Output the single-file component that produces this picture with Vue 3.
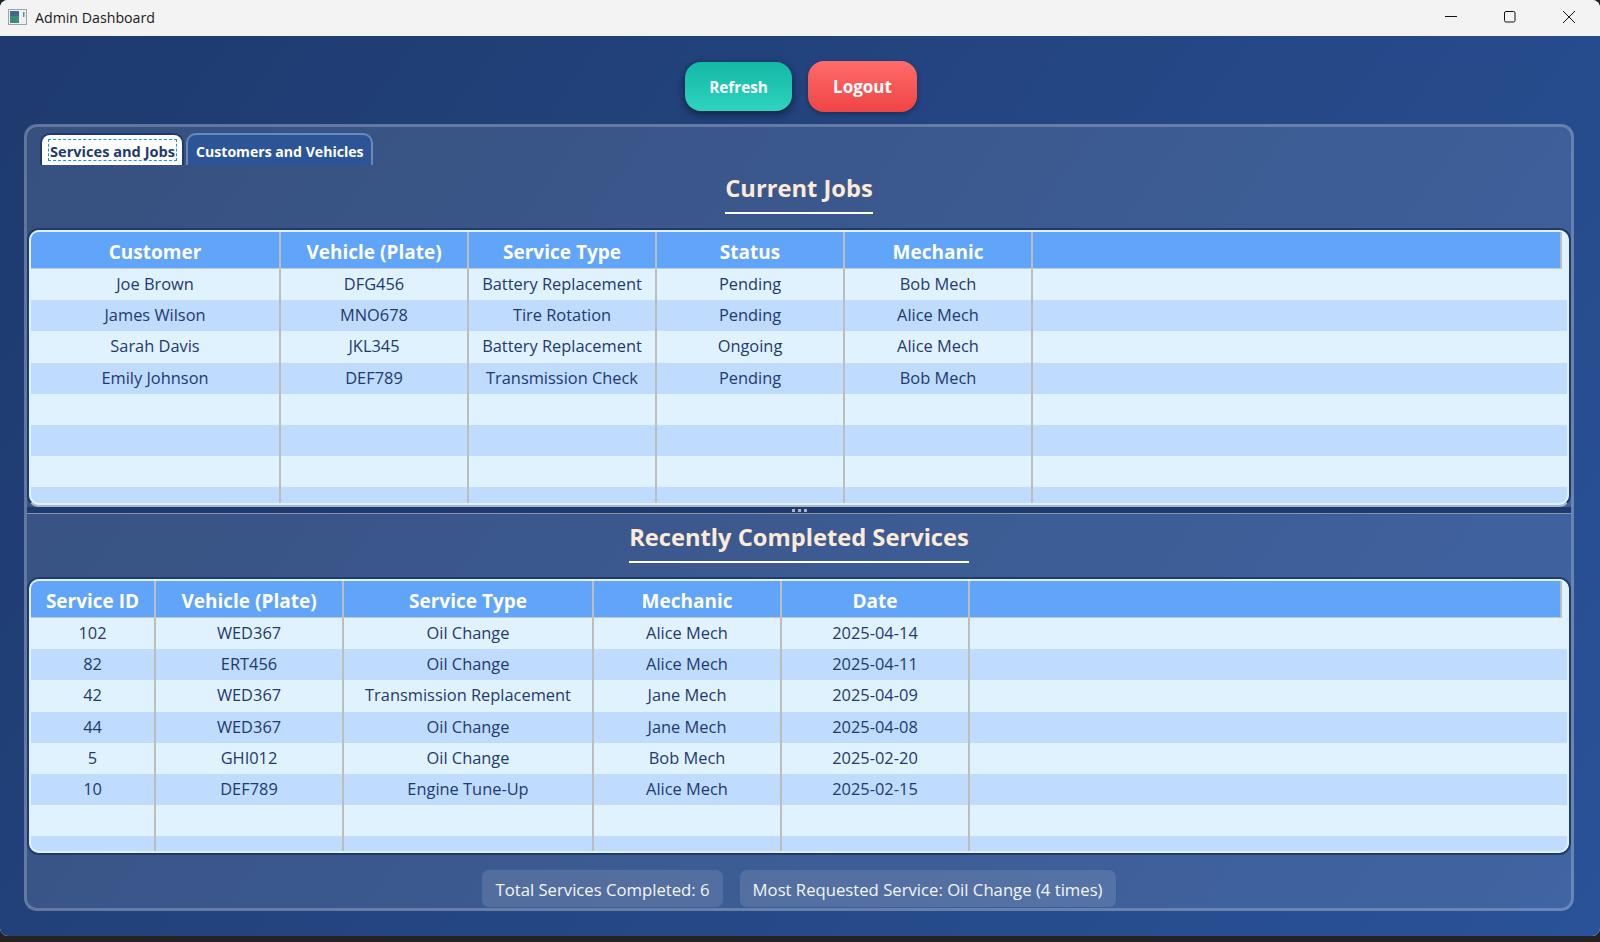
<script setup>
const jobCols = [
  { label: 'Customer', width: 250 },
  { label: 'Vehicle (Plate)', width: 188 },
  { label: 'Service Type', width: 188 },
  { label: 'Status', width: 188 },
  { label: 'Mechanic', width: 188 },
];
const jobs = [
  ['Joe Brown', 'DFG456', 'Battery Replacement', 'Pending', 'Bob Mech'],
  ['James Wilson', 'MNO678', 'Tire Rotation', 'Pending', 'Alice Mech'],
  ['Sarah Davis', 'JKL345', 'Battery Replacement', 'Ongoing', 'Alice Mech'],
  ['Emily Johnson', 'DEF789', 'Transmission Check', 'Pending', 'Bob Mech'],
];

const serviceCols = [
  { label: 'Service ID', width: 125 },
  { label: 'Vehicle (Plate)', width: 188 },
  { label: 'Service Type', width: 250 },
  { label: 'Mechanic', width: 188 },
  { label: 'Date', width: 188 },
];
const services = [
  ['102', 'WED367', 'Oil Change', 'Alice Mech', '2025-04-14'],
  ['82', 'ERT456', 'Oil Change', 'Alice Mech', '2025-04-11'],
  ['42', 'WED367', 'Transmission Replacement', 'Jane Mech', '2025-04-09'],
  ['44', 'WED367', 'Oil Change', 'Jane Mech', '2025-04-08'],
  ['5', 'GHI012', 'Oil Change', 'Bob Mech', '2025-02-20'],
  ['10', 'DEF789', 'Engine Tune-Up', 'Alice Mech', '2025-02-15'],
];

const tables = [
  { title: 'Current Jobs', cols: jobCols, rows: jobs },
  { title: 'Recently Completed Services', cols: serviceCols, rows: services },
];

function fillRows(rows, cols) {
  const blank = cols.map(() => '');
  return [...rows, ...Array.from({ length: 8 - rows.length }, () => blank)];
}

function gridColumns(cols) {
  return { gridTemplateColumns: `${cols.map((col) => `${col.width}px`).join(' ')} 1fr` };
}
</script>

<template>
  <div class="window">
    <header class="titlebar">
      <div class="titlebar__name">
        <svg class="app-icon" width="19" height="16" viewBox="0 0 19 16">
          <rect x="0.5" y="0.5" width="18" height="15" fill="#f0f0f0" stroke="#9aa3a8" />
          <rect x="2" y="2" width="9" height="12" fill="#3d8a80" />
          <rect x="2" y="2" width="9" height="5" fill="#3f6a8f" />
          <rect x="15" y="3" width="1.5" height="5" fill="#4a9a90" />
        </svg>
        <span>Admin Dashboard</span>
      </div>
      <div class="titlebar__controls">
        <svg width="14" height="14" viewBox="0 0 14 14"><path d="M1 6.5h12" stroke="#111" fill="none" /></svg>
        <svg width="14" height="14" viewBox="0 0 14 14"><rect x="1.5" y="1.5" width="10.5" height="10.5" rx="1.5" stroke="#111" fill="none" /></svg>
        <svg width="14" height="14" viewBox="0 0 14 14"><path d="M1 1l12 12M13 1L1 13" stroke="#111" fill="none" /></svg>
      </div>
    </header>

    <main class="content">
      <div class="actions">
        <button class="btn btn--refresh">Refresh</button>
        <button class="btn btn--logout">Logout</button>
      </div>

      <section class="panel">
        <div class="tabs">
          <div class="tab tab--active"><span>Services and Jobs</span></div>
          <div class="tab">Customers and Vehicles</div>
        </div>

        <div
          v-for="(table, index) in tables"
          :key="table.title"
          class="pane"
        >
          <h2 class="pane__title"><span>{{ table.title }}</span></h2>
          <div class="table" :class="{ 'table--top': index === 0 }">
            <div class="table__inner">
              <div class="row row--head" :style="gridColumns(table.cols)">
                <div v-for="col in table.cols" :key="col.label" class="cell">{{ col.label }}</div>
                <div class="cell cell--filler"></div>
              </div>
              <div
                v-for="(row, rowIndex) in fillRows(table.rows, table.cols)"
                :key="rowIndex"
                class="row"
                :class="{ 'row--alt': rowIndex % 2 === 1 }"
                :style="gridColumns(table.cols)"
              >
                <div v-for="(value, cellIndex) in row" :key="cellIndex" class="cell">{{ value }}</div>
                <div class="cell cell--filler"></div>
              </div>
            </div>
          </div>
          <div v-if="index === 0" class="splitter"><i></i><i></i><i></i></div>
        </div>

        <div class="stats">
          <div class="stat">Total Services Completed: 6</div>
          <div class="stat">Most Requested Service: Oil Change (4 times)</div>
        </div>
      </section>
    </main>
  </div>
</template>

<style>
html,
body {
  margin: 0;
  background: #232323;
}
</style>

<style scoped>
.window {
  width: 1600px;
  height: 936px;
  display: flex;
  flex-direction: column;
  overflow: hidden;
  border-radius: 8px;
  font-family: "Open Sans", "Noto Sans", sans-serif;
  background: #f3f3f3;
}

.titlebar {
  height: 36px;
  box-sizing: border-box;
  padding-bottom: 2px;
  flex: none;
  display: flex;
  align-items: center;
  justify-content: space-between;
  background: #f3f3f3;
  font-size: 14.2px;
  color: #1a1a1a;
}

.titlebar__name {
  display: flex;
  align-items: center;
  gap: 8px;
  padding-left: 8px;
}

.titlebar__controls {
  display: flex;
  gap: 45px;
  padding-right: 24px;
}

.content {
  flex: 1;
  display: flex;
  flex-direction: column;
  padding: 25px 26px 25px 24px;
  background: linear-gradient(125deg, #1e3a6e 0%, #2a5298 100%);
}

.actions {
  height: 63px;
  flex: none;
  display: flex;
  justify-content: center;
  align-items: flex-start;
  gap: 16px;
  padding-left: 4px;
}

.btn {
  border: none;
  padding: 0;
  color: #fff;
  font-family: inherit;
  font-weight: 700;
}

.btn--refresh {
  width: 107px;
  height: 49px;
  margin-top: 1px;
  border-radius: 16px;
  font-size: 15.3px;
  background: linear-gradient(180deg, #14b8a6, #2dd4bf);
  box-shadow: 0 3px 8px rgba(0, 0, 0, 0.55);
}

.btn--logout {
  width: 109px;
  height: 51px;
  border-radius: 16px;
  font-size: 17px;
  background: linear-gradient(180deg, #ff6b6b, #ef4444);
  box-shadow: 0 2px 5px rgba(0, 0, 0, 0.3);
}

.panel {
  flex: 1;
  min-height: 0;
  box-sizing: border-box;
  border: 3px solid rgba(255, 255, 255, 0.3);
  border-radius: 13px;
  background: rgba(255, 255, 255, 0.11);
  background-clip: padding-box;
  padding: 6px 0 0;
  display: flex;
  flex-direction: column;
}

.tabs {
  display: flex;
  gap: 0;
  padding-left: 13px;
  height: 32px;
  flex: none;
}

.tab {
  box-sizing: border-box;
  height: 32px;
  padding: 7px 7px 0 8px;
  border: 2px solid rgba(255, 255, 255, 0.3);
  border-bottom: none;
  border-radius: 10px 10px 0 0;
  background: #2c5597;
  color: #fff;
  font-size: 14.1px;
  line-height: 19px;
  font-weight: 700;
  white-space: nowrap;
}

.tab--active {
  padding: 5px 6px 0 7px;
  margin-right: 2px;
  border-color: #1e3a6e;
  background: #fff;
  color: #1e3a6e;
  font-size: 14.6px;
}

.tab--active span {
  display: block;
  outline: 1px dashed #1e90ff;
  line-height: 18px;
  padding: 2px 1px 0;
}

.pane {
  flex: none;
}

.pane__title {
  margin: 0;
  height: 63px;
  box-sizing: border-box;
  padding-top: 6px;
  text-align: center;
  color: #fdebd8;
  font-size: 23.7px;
  line-height: 34px;
  font-weight: 700;
}

.pane__title span {
  display: inline-block;
  height: 41px;
  border-bottom: 2px solid #fff;
}

.table {
  box-sizing: border-box;
  height: 278px;
  border: 2px solid #1e3a6e;
  border-radius: 12px;
  background: #e0f2fe;
  overflow: hidden;
}

.table--top {
  height: 279px;
  border-bottom-color: #a9b6cb;
}

.table__inner {
  height: 100%;
  box-sizing: border-box;
  border: 2px solid #e0f2fe;
  border-radius: 10px;
  overflow: hidden;
}

.row {
  display: grid;
  height: 31.2px;
  background: #e0f2fe;
  color: #1e3a6e;
  font-size: 16.4px;
}

.row--alt {
  background: #bfdbfe;
}

.row .cell {
  padding-bottom: 2px;
}

.row--head {
  box-sizing: content-box;
  height: 36px;
  margin-right: 5px;
  border-bottom: 1px solid #bbc8d8;
  background: #60a5fa;
  color: #fff;
  font-size: 19px;
  font-weight: 700;
}

.row--head .cell {
  padding: 4px 0 0;
}

.row--head .cell--filler {
  border-right: 2px solid #bdbdbd;
}

.cell {
  box-sizing: border-box;
  display: flex;
  align-items: center;
  justify-content: center;
  border-right: 2px solid #bdbdbd;
  white-space: nowrap;
}

.cell--filler {
  border-right: none;
}

.splitter {
  height: 6px;
  border-bottom: 1px solid #8a94a8;
  background: #1e3a6e;
  display: flex;
  justify-content: center;
  align-items: center;
  gap: 3px;
}

.splitter i {
  width: 3px;
  height: 3px;
  background: #aab3c4;
}

.stats {
  flex: 1;
  display: flex;
  justify-content: center;
  align-items: flex-start;
  gap: 15px;
  padding-top: 14px;
}

.stat {
  box-sizing: border-box;
  height: 39px;
  padding: 2px 13px 0;
  display: flex;
  align-items: center;
  border: 1px solid #34609f;
  border-radius: 8px;
  background: rgba(255, 255, 255, 0.12);
  color: #f3f6fb;
  font-size: 16.7px;
}
</style>
